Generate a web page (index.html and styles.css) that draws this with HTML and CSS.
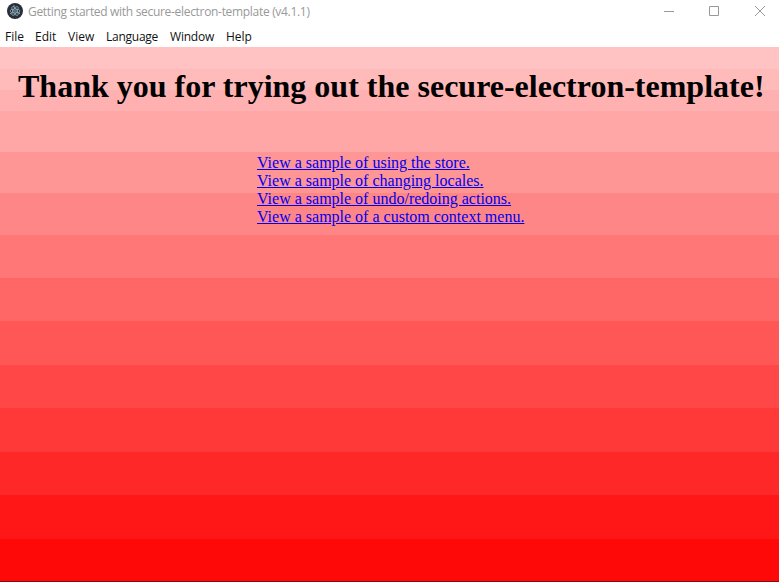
FILE: index.html
```
<!DOCTYPE html>
<html lang="en">
<head>
<meta charset="utf-8">
<title>Getting started with secure-electron-template (v4.1.1)</title>
<link rel="stylesheet" href="styles.css">
</head>
<body>
<header class="titlebar">
  <svg class="logo" viewBox="0 0 16 16" width="16" height="16">
    <circle cx="8" cy="8" r="8" fill="#2b2e3a"/>
    <g fill="none" stroke="#8fb4bd" stroke-width=".75">
      <ellipse cx="8" cy="8" rx="5" ry="2"/>
      <ellipse cx="8" cy="8" rx="5" ry="2" transform="rotate(60 8 8)"/>
      <ellipse cx="8" cy="8" rx="5" ry="2" transform="rotate(120 8 8)"/>
    </g>
    <g fill="#9fc3cb"><circle cx="8" cy="8" r=".8"/><circle cx="3.8" cy="10.6" r=".7"/><circle cx="12.3" cy="10.3" r=".7"/><circle cx="7" cy="3" r=".7"/></g>
  </svg>
  <span class="title">Getting started with secure-electron-template (v4.1.1)</span>
  <div class="controls">
    <svg viewBox="0 0 10 10" width="10" height="10"><path d="M0 5.5h10"/></svg>
    <svg viewBox="0 0 10 10" width="10" height="10"><path d="M.5.5h9v9h-9z"/></svg>
    <svg viewBox="0 0 10 10" width="10" height="10"><path d="M0 0l10 10M10 0L0 10"/></svg>
  </div>
</header>
<nav class="menu">
  <span class="file">File</span><span class="edit">Edit</span><span class="view">View</span><span class="language">Language</span><span class="window">Window</span><span class="help">Help</span>
</nav>
<main class="content">
  <h1>Thank you for trying out the secure-electron-template!</h1>
  <div class="links">
    <a href="#">View a sample of using the store.</a>
    <a href="#">View a sample of changing locales.</a>
    <a href="#">View a sample of undo/redoing actions.</a>
    <a href="#">View a sample of a custom context menu.</a>
  </div>
</main>
</body>
</html>
```
FILE: styles.css
```
* { box-sizing: border-box; }
body {
  margin: 0;
  height: 582px;
  display: flex;
  flex-direction: column;
  overflow: hidden;
  background: #fff;
}
.titlebar {
  height: 24px;
  padding-left: 7px;
  display: flex;
  align-items: flex-start;
  font: 12px/24px "Open Sans", sans-serif;
  color: #999;
}
.logo { margin: 3px 5px 0 0; }
.title { white-space: nowrap; letter-spacing: -0.31px; }
.controls {
  margin: 6px 14px 0 auto;
  display: flex;
  gap: 36px;
}
.controls svg { fill: none; stroke: #999; stroke-width: 1; }
.controls svg:nth-child(1) { margin-right: -1px; }
.menu {
  height: 23px;
  padding-left: 5px;
  display: flex;
  font: 12px/26px "Open Sans", sans-serif;
  color: #111;
}
.menu span { white-space: nowrap; }
.file { width: 30px; }
.edit { width: 33px; }
.view { width: 38px; }
.language { width: 64px; letter-spacing: -0.25px; }
.window { width: 56px; letter-spacing: -0.2px; }
.content {
  flex: 1;
  border-bottom: 1px solid #7a1010;
  background: linear-gradient(
    #ffc3c3 22px, #ffbaba 22px 43px, #ffb0b0 43px 64px, #ffa6a6 64px 105px,
    #ff9696 105px 146px, #ff8686 146px 188px, #ff7777 188px 231px,
    #ff6767 231px 274px, #ff5656 274px 318px, #ff4747 318px 361px,
    #ff3838 361px 405px, #ff2828 405px 448px, #ff1717 448px 492px, #ff0808 492px);
  font-family: "Liberation Serif", serif;
}
h1 {
  margin: 21px 0 0 18px;
  font-size: 32px;
  line-height: 37px;
  white-space: nowrap;
  color: #000;
}
.links {
  margin: 49px 0 0 257px;
  display: flex;
  flex-direction: column;
  align-items: flex-start;
  font-size: 16px;
  line-height: 18px;
}
.links a { color: #0000ee; white-space: nowrap; }
```
